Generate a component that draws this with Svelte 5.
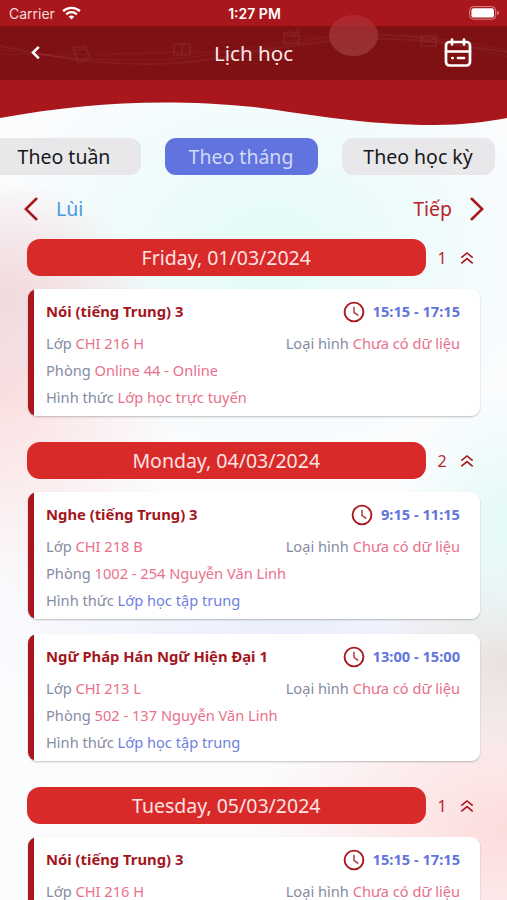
<script>
	const tabs = [
		{ id: 'week', label: 'Theo tuần' },
		{ id: 'month', label: 'Theo tháng' },
		{ id: 'semester', label: 'Theo học kỳ' }
	];

	const days = [
		{
			date: 'Friday, 01/03/2024',
			lessons: [
				{ name: 'Nói (tiếng Trung) 3', time: '15:15 - 17:15', group: 'CHI 216 H', room: 'Online 44 - Online', mode: 'Lớp học trực tuyến', online: true }
			]
		},
		{
			date: 'Monday, 04/03/2024',
			lessons: [
				{ name: 'Nghe (tiếng Trung) 3', time: '9:15 - 11:15', group: 'CHI 218 B', room: '1002 - 254 Nguyễn Văn Linh', mode: 'Lớp học tập trung', online: false },
				{ name: 'Ngữ Pháp Hán Ngữ Hiện Đại 1', time: '13:00 - 15:00', group: 'CHI 213 L', room: '502 - 137 Nguyễn Văn Linh', mode: 'Lớp học tập trung', online: false }
			]
		},
		{
			date: 'Tuesday, 05/03/2024',
			lessons: [
				{ name: 'Nói (tiếng Trung) 3', time: '15:15 - 17:15', group: 'CHI 216 H', room: 'Online 44 - Online', mode: 'Lớp học trực tuyến', online: true }
			]
		}
	];

	let activeTab = $state('month');
	let closed = $state({});

	function toggleDay(date) {
		closed[date] = !closed[date];
	}
</script>

<div class="screen">
	<div class="hero">
		<svg class="wave" viewBox="0 0 507 130" aria-hidden="true">
			<path d="M0 0H507V118C485 122 463 125 435 125C365 125 315 115 254 107C160 98 85 103 0 118Z" fill="#a9161c" />
		</svg>

		<div class="status">
			<div class="carrier">
				<span>Carrier</span>
				<svg width="19" height="14" viewBox="0 0 19 14" fill="none" stroke="#fff" stroke-width="2.3">
					<path d="M1.1 5.2C5.8.7 13.2.7 17.9 5.2" />
					<path d="M4.2 8.3C7.2 5.5 11.8 5.5 14.8 8.3" />
					<path d="M9.5 13.6L6.7 10.7Q9.5 8.5 12.3 10.7Z" fill="#fff" stroke="none" />
				</svg>
			</div>
			<strong>1:27 PM</strong>
			<svg class="battery" width="31" height="14" viewBox="0 0 31 14">
				<rect x=".7" y=".6" width="26" height="12.6" rx="3.8" fill="none" stroke="#d7898c" stroke-width="1" />
				<rect x="2.4" y="2.2" width="22.6" height="9.4" rx="2.2" fill="#fff" />
				<path d="M28.2 4.8Q30 5.4 30 6.9Q30 8.4 28.2 9Z" fill="#d7898c" />
			</svg>
		</div>

		<header>
			<svg class="pattern" viewBox="0 0 507 54" fill="none" stroke="#fff" aria-hidden="true">
				<g stroke-opacity=".05">
					<path d="M0 20C55 31 90 38 150 38S260 22 330 15S450 18 507 26" stroke-width="2" />
					<path d="M0 23C60 33 95 34 150 34S260 17 330 10S450 15 507 31" />
					<path d="M0 28C50 29 90 29 150 27S240 29 290 18S420 5 507 24" />
					<path d="M73 22L85 20L90 32L78 37Z M75 25L87 22 M77 36L74 23" stroke-width="2" />
					<path d="M174 18H190V29H174Z M182 18V29" stroke-width="2" />
					<path d="M284 7H299V17H284Z M284 10H299 M289 4L294 12L298 3" stroke-width="2" />
					<path d="M421 10H436V20H421Z M421 12L428 16L436 11" stroke-width="2" />
				</g>
			</svg>
			<button class="back" aria-label="Quay lại">
				<svg width="12" height="16" viewBox="0 0 12 16" fill="none" stroke="#fff" stroke-width="2.6"><path d="M9.8 1.8L4 7.6L9.8 13.4" /></svg>
			</button>
			<h1>Lịch học</h1>
			<button class="calendar" aria-label="Lịch">
				<svg width="28" height="30" viewBox="0 0 28 30" fill="none" stroke="#fff" stroke-width="2.7" stroke-linecap="round" stroke-linejoin="round">
					<rect x="2" y="4" width="24" height="23.5" rx="3.5" />
					<path d="M8 1.5V6.5M20 1.5V6.5M2 13.5H26" />
					<path d="M8.3 20H8.6M14 20H20" />
				</svg>
			</button>
		</header>
		<div class="bubble"></div>
	</div>

	<nav class="tabs">
		{#each tabs as tab}
			<button class="tab" class:active={activeTab === tab.id} onclick={() => (activeTab = tab.id)}>{tab.label}</button>
		{/each}
	</nav>

	<div class="pager">
		<button class="prev">
			<svg width="14" height="24" viewBox="0 0 14 24" fill="none" stroke="#a9161c" stroke-width="2.6" stroke-linecap="round"><path d="M12.3 1.8L1.8 12L12.3 22.2" /></svg>
			<span>Lùi</span>
		</button>
		<button class="next">
			<span>Tiếp</span>
			<svg width="14" height="24" viewBox="0 0 14 24" fill="none" stroke="#a9161c" stroke-width="2.6" stroke-linecap="round"><path d="M1.7 1.8L12.2 12L1.7 22.2" /></svg>
		</button>
	</div>

	<main>
		{#each days as day}
			<section>
				<div class="day">
					<div class="date">{day.date}</div>
					<button class="count" onclick={() => toggleDay(day.date)}>
						<span>{day.lessons.length}</span>
						<svg class:down={closed[day.date]} width="14" height="14" viewBox="0 0 14 14" fill="none" stroke="#a9161c" stroke-width="1.6"><path d="M1.3 6.7L7 2L12.7 6.7M1.3 12.3L7 7.6L12.7 12.3" /></svg>
					</button>
				</div>

				{#if !closed[day.date]}
					{#each day.lessons as lesson}
						<article>
							<div class="title">
								<h2>{lesson.name}</h2>
								<div class="time">
									<svg width="22" height="22" viewBox="0 0 22 22" fill="none" stroke="#a9161c" stroke-width="1.9"><circle cx="11" cy="11" r="9.4" /><path d="M11 5.8V11.3L15.2 14.5" stroke-width="1.6" stroke="#b9474d" /></svg>
									<span>{lesson.time}</span>
								</div>
							</div>
							<div class="line">
								<p>Lớp <span>{lesson.group}</span></p>
								<p>Loại hình <span>Chưa có dữ liệu</span></p>
							</div>
							<p>Phòng <span>{lesson.room}</span></p>
							<p>Hình thức <span class:offline={!lesson.online}>{lesson.mode}</span></p>
						</article>
					{/each}
				{/if}
			</section>
		{/each}
	</main>
</div>

<style>
	:global(body) {
		margin: 0;
	}

	.screen {
		position: relative;
		height: 900px;
		overflow: hidden;
		font-family: 'Noto Sans', sans-serif;
		background:
			radial-gradient(ellipse 150px 120px at 0 300px, #f0dade 0%, #f0dade00 100%),
			radial-gradient(ellipse 180px 210px at 0 390px, #fbdfe0 0%, #fbdfe000 100%),
			radial-gradient(ellipse 290px 210px at 270px 250px, #e2fbf7 0%, #e2fbf700 100%),
			radial-gradient(ellipse 110px 140px at 507px 525px, #e3faf7 0%, #e3faf700 100%),
			radial-gradient(ellipse 130px 110px at 507px 660px, #e9e1de 0%, #e9e1de00 100%),
			radial-gradient(ellipse 260px 180px at 507px 830px, #fddcdc 0%, #fddcdc00 100%),
			radial-gradient(ellipse 330px 130px at 290px 620px, #ebeffc 0%, #ebeffc00 100%),
			#fbfcfe;
	}

	button {
		border: 0;
		padding: 0;
		background: none;
		font: inherit;
		cursor: pointer;
	}

	svg {
		display: block;
	}

	h1, h2, p {
		margin: 0;
	}

	.hero {
		position: relative;
		height: 137.5px;
	}

	.wave {
		position: absolute;
		inset: 0;
		width: 507px;
		height: 130px;
	}

	.status {
		position: relative;
		display: grid;
		grid-template-columns: 1fr auto 1fr;
		align-items: center;
		height: 26px;
		padding: 0 7px 0 9px;
		color: #fff;
		font-family: Inter, sans-serif;
		font-size: 14px;
	}

	.status strong {
		font-weight: 600;
	}

	.carrier {
		display: flex;
		align-items: center;
		gap: 7px;
		color: #f5dcdd;
	}

	.battery {
		justify-self: end;
	}

	header {
		position: relative;
		display: grid;
		grid-template-columns: 1fr auto 1fr;
		align-items: center;
		height: 54px;
		padding: 0 35px 0 29px;
		background: #7f1013;
	}

	.pattern {
		position: absolute;
		inset: 0;
		width: 507px;
		height: 54px;
	}

	.bubble {
		position: absolute;
		left: 329px;
		top: 15px;
		width: 49px;
		height: 41px;
		border-radius: 50%;
		background: linear-gradient(#b62c32, #a83236 25%, #9c3d3f);
		opacity: 0.75;
	}

	h1 {
		position: relative;
		left: 3px;
		color: #fbe9e9;
		font-size: 20.6px;
		font-weight: 400;
		line-height: 28px;
		padding-bottom: 1px;
	}

	.back, .calendar {
		position: relative;
	}

	.calendar {
		justify-self: end;
	}

	.tabs {
		display: flex;
		gap: 24px;
		height: 37px;
		margin-left: -12.5px;
	}

	.tab {
		flex: none;
		width: 153px;
		border-radius: 11px;
		background: #e8e8ea;
		color: #17181a;
		font-size: 19.5px;
		line-height: 37px;
	}

	.tab.active {
		background: #6073df;
		color: #d3d9f8;
	}

	.pager {
		display: flex;
		justify-content: space-between;
		align-items: center;
		height: 36px;
		padding: 16px 23px 12px 24px;
		font-size: 19.5px;
	}

	.prev, .next {
		display: flex;
		align-items: center;
		gap: 18px;
		color: #b8242c;
	}

	.prev {
		color: #459ce4;
	}

	main {
		padding: 0 26.5px;
	}

	section {
		margin-bottom: 25.5px;
	}

	.day {
		display: flex;
		align-items: center;
		height: 37px;
		margin-bottom: 13.5px;
	}

	.date {
		width: 399.5px;
		border-radius: 13px;
		background: #d92a2a;
		color: #fce3e3;
		font-size: 19.5px;
		line-height: 37px;
		text-align: center;
	}

	.count {
		display: flex;
		align-items: center;
		gap: 13px;
		margin-left: 11.5px;
		padding-top: 1px;
		color: #b62830;
		font-size: 16px;
	}

	.down {
		transform: rotate(180deg);
	}

	article {
		box-sizing: border-box;
		height: 127px;
		margin: 0 0 15px 1px;
		width: 452.5px;
		padding: 9px 20px 0 18.5px;
		border-radius: 9px;
		background: linear-gradient(90deg, #a9161c 6.5px, #fff 6.5px);
		box-shadow: 0 1px 2px #0000003d;
		color: #858ba3;
		font-size: 14.63px;
		line-height: 27px;
	}

	.title, .line, .time {
		display: flex;
		justify-content: space-between;
		align-items: center;
	}

	.title {
		height: 27px;
		margin-bottom: 5px;
	}

	h2 {
		color: #a3161d;
		font-size: 14.8px;
		font-weight: 700;
	}

	.time {
		gap: 8px;
		color: #6375dc;
		font-weight: 700;
	}

	p span {
		color: #e9708a;
	}

	p .offline {
		color: #6f7fe0;
	}
</style>
